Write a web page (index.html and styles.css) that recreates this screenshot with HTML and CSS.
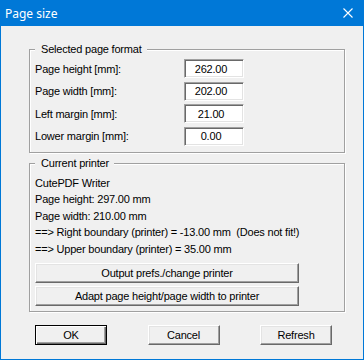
FILE: index.html
```html
<!DOCTYPE html>
<html lang="en">
<head>
    <meta charset="UTF-8">
    <title>Page size</title>
    <link rel="stylesheet" href="styles.css">
</head>
<body>
    <div class="window">
        <div class="titlebar">
            <span class="title">Page size</span>
            <svg class="close" width="10" height="10" viewBox="0 0 10 10">
                <path d="M0.5 0.5 L9.5 9.5 M9.5 0.5 L0.5 9.5" stroke="#fff" stroke-width="1.1" fill="none"/>
            </svg>
        </div>

        <div class="client">
            <fieldset class="group format">
                <legend>Selected page format</legend>
                <div class="field">
                    <label for="height">Page height [mm]:</label>
                    <input type="text" id="height" value="262.00">
                </div>
                <div class="field">
                    <label for="width">Page width [mm]:</label>
                    <input type="text" id="width" value="202.00">
                </div>
                <div class="field">
                    <label for="left">Left margin [mm]:</label>
                    <input type="text" id="left" value="21.00">
                </div>
                <div class="field">
                    <label for="lower">Lower margin [mm]:</label>
                    <input type="text" id="lower" value="0.00">
                </div>
            </fieldset>

            <fieldset class="group printer">
                <legend>Current printer</legend>
                <p class="info">CutePDF Writer</p>
                <p class="info">Page height: 297.00 mm</p>
                <p class="info">Page width: 210.00 mm</p>
                <p class="info">==&gt; Right boundary (printer) = -13.00 mm  (Does not fit!)</p>
                <p class="info">==&gt; Upper boundary (printer) = 35.00 mm</p>
                <div class="printer-buttons">
                    <button type="button" class="btn wide">Output prefs./change printer</button>
                    <button type="button" class="btn wide">Adapt page height/page width to printer</button>
                </div>
            </fieldset>

            <div class="actions">
                <button type="button" class="btn default">OK</button>
                <button type="button" class="btn">Cancel</button>
                <button type="button" class="btn">Refresh</button>
            </div>
        </div>
    </div>
</body>
</html>
```

FILE: styles.css
```css
body {
    margin: 0;
    padding: 0;
    font-family: "Liberation Sans", Arial, sans-serif;
    font-size: 11px;
    letter-spacing: -0.2px;
    color: #000;
}
.window {
    width: 364px;
    height: 360px;
    box-sizing: border-box;
    border: 1px solid #0078d7;
    background-color: #f0f0f0;
}
.titlebar {
    display: flex;
    align-items: center;
    justify-content: space-between;
    height: 25px;
    background-color: #0078d7;
    color: #fff;
}
.title {
    padding-left: 4px;
    font-family: "Noto Sans", sans-serif;
    font-size: 12px;
    letter-spacing: 0;
}
.close {
    margin-right: 10px;
    margin-top: -1px;
}
.client {
    padding: 17px 18px 0 28px;
}
.group {
    margin: 0;
    padding: 3px 5px 6px 5px;
    border: 1px solid #a0a0a0;
    box-shadow: 1px 1px 0 #fff, inset 1px 1px 0 #fff;
    min-inline-size: 0;
}
.group legend {
    padding: 0 5px 0 6px;
    line-height: 13px;
    background-color: #f0f0f0;
}
.format {
    display: flex;
    flex-direction: column;
    gap: 3.67px;
}
.field {
    display: flex;
    align-items: center;
}
.field label {
    width: 149px;
}
.field input {
    width: 60px;
    height: 19px;
    box-sizing: border-box;
    padding: 0 6px 0 0;
    border: 1px solid;
    border-color: #a0a0a0 #fff #fff #a0a0a0;
    box-shadow: inset 1px 1px 0 #696969, inset -1px -1px 0 #e3e3e3;
    background-color: #fff;
    font-family: inherit;
    font-size: 11px;
    letter-spacing: -0.2px;
    text-align: center;
    outline: none;
}
.printer {
    margin-top: 4px;
    padding-bottom: 5px;
}
.info {
    margin: 0;
    line-height: 16.5px;
    white-space: pre;
}
.info:first-of-type {
    margin-top: 2px;
}
.printer-buttons {
    display: flex;
    flex-direction: column;
    gap: 3px;
    margin-top: 6px;
}
.btn {
    height: 20px;
    box-sizing: border-box;
    padding: 0;
    border: 1px solid;
    border-color: #fff #696969 #696969 #fff;
    box-shadow: inset -1px -1px 0 #a0a0a0, inset 1px 1px 0 #e3e3e3;
    background-color: #f0f0f0;
    font-family: inherit;
    font-size: 11px;
    letter-spacing: -0.2px;
    color: #000;
}
.btn.wide {
    width: 264px;
}
.actions {
    display: flex;
    justify-content: space-between;
    width: 297px;
    margin: 13px 0 0 6px;
}
.actions .btn {
    width: 72px;
}
.btn.default {
    border-color: #000;
    box-shadow: inset 1px 1px 0 #fff, inset -1px -1px 0 #696969, inset -2px -2px 0 #a0a0a0;
}
```
